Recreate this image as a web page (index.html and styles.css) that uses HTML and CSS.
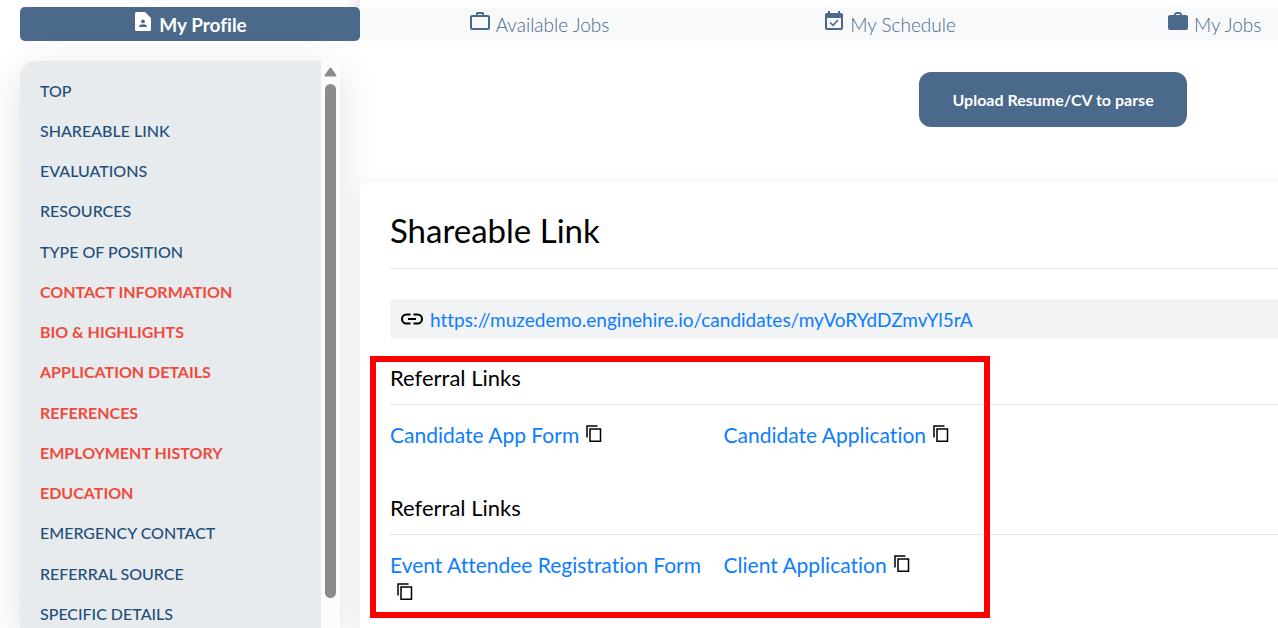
FILE: index.html
```html
<!DOCTYPE html>
<html lang="en">
<head>
<meta charset="utf-8">
<title>My Profile</title>
<link rel="stylesheet" href="styles.css">
</head>
<body>
<svg class="defs" aria-hidden="true">
  <symbol id="copy" viewBox="0 0 16 18"><path d="M1 12.500V1H11.500" /><path d="M4 4H14.500V16.250H4Z" /></symbol>
</svg>
<div class="page">
  <div class="top-edge"></div>
  <nav class="tabs">
    <a class="tab active" href="#profile">
      <svg class="tab-icon" viewBox="0 0 20 22"><path fill="currentColor" fill-rule="evenodd" d="M3.500 1H12L18 7V18.500Q18 20 16.500 20H3.500Q2 20 2 18.500V2.500Q2 1 3.500 1ZM10 8.500A1.900 1.900 0 1 0 10 12.300A1.900 1.900 0 1 0 10 8.500ZM6.200 16H13.800V15Q13.500 13.400 10 13.300Q6.500 13.400 6.200 15Z"/></svg>
      <span>My Profile</span>
    </a>
    <a class="tab" href="#available">
      <svg class="tab-icon" viewBox="0 0 20 22"><path fill="none" stroke="currentColor" stroke-width="2" d="M2 5H18Q19 5 19 6V17Q19 18 18 18H2Q1 18 1 17V6Q1 5 2 5ZM7 5V2.500Q7 2 7.500 2H12.500Q13 2 13 2.500V5"/></svg>
      <span>Available Jobs</span>
    </a>
    <a class="tab" href="#schedule">
      <svg class="tab-icon" viewBox="0 0 20 22"><path fill="currentColor" fill-rule="evenodd" d="M4 0H6V2H14V0H16V2H17Q19 2 19 4V17Q19 19 17 19H3Q1 19 1 17V4Q1 2 3 2H4ZM3 7V17H17V7Z"/><path fill="none" stroke="currentColor" stroke-width="1.600" d="M6 11.500L9 14.300L14 9"/></svg>
      <span>My Schedule</span>
    </a>
    <a class="tab last" href="#jobs">
      <svg class="tab-icon" viewBox="0 0 20 22"><path fill="currentColor" fill-rule="evenodd" d="M6 4V3L8 1H12L14 3V4H18Q20 4 20 6V17Q20 19 18 19H2Q0 19 0 17V6Q0 4 2 4ZM8 4H12V3H8Z"/></svg>
      <span>My Jobs</span>
    </a>
  </nav>
  <div class="columns">
    <aside class="sidebar">
      <ul class="menu">
        <li><a href="#top">TOP</a></li>
        <li><a href="#share">SHAREABLE LINK</a></li>
        <li><a href="#evaluations">EVALUATIONS</a></li>
        <li><a href="#resources">RESOURCES</a></li>
        <li><a href="#position">TYPE OF POSITION</a></li>
        <li><a class="missing" href="#contact">CONTACT INFORMATION</a></li>
        <li><a class="missing" href="#bio">BIO &amp; HIGHLIGHTS</a></li>
        <li><a class="missing" href="#application">APPLICATION DETAILS</a></li>
        <li><a class="missing" href="#references">REFERENCES</a></li>
        <li><a class="missing" href="#employment">EMPLOYMENT HISTORY</a></li>
        <li><a class="missing" href="#education">EDUCATION</a></li>
        <li><a href="#emergency">EMERGENCY CONTACT</a></li>
        <li><a href="#source">REFERRAL SOURCE</a></li>
        <li><a href="#specific">SPECIFIC DETAILS</a></li>
      </ul>
      <div class="scrollbar">
        <svg class="scroll-up" viewBox="0 0 13 10"><path d="M6.500 1.500L11.500 8.500H1.500Z"/></svg>
        <div class="thumb"></div>
      </div>
    </aside>
    <main class="content">
      <button class="upload" type="button">Upload Resume/CV to parse</button>
      <section class="panel" id="share">
        <h1>Shareable Link</h1>
        <div class="link-bar">
          <svg class="chain" viewBox="0 0 24 14"><path d="M10.500 2.500H6.500A4.500 4.500 0 0 0 6.500 11.500H10.500M13.500 2.500H17.500A4.500 4.500 0 0 1 17.500 11.500H13.500M8 7H16"/></svg>
          <a href="#candidate">https://muzedemo.enginehire.io/candidates/myVoRYdDZmvYl5rA</a>
        </div>
        <h2>Referral Links</h2>
        <div class="links">
          <div><a href="#app-form">Candidate App Form</a><button class="copy" type="button" aria-label="Copy"><svg><use href="#copy"/></svg></button></div>
          <div><a href="#application-form">Candidate Application</a><button class="copy" type="button" aria-label="Copy"><svg><use href="#copy"/></svg></button></div>
        </div>
        <h2>Referral Links</h2>
        <div class="links">
          <div><a href="#event">Event Attendee Registration Form</a><button class="copy" type="button" aria-label="Copy"><svg><use href="#copy"/></svg></button></div>
          <div><a href="#client">Client Application</a><button class="copy" type="button" aria-label="Copy"><svg><use href="#copy"/></svg></button></div>
        </div>
        <div class="highlight"></div>
      </section>
    </main>
  </div>
</div>
</body>
</html>
```
FILE: styles.css
```css
* { box-sizing: border-box; }
body {
  margin: 0;
  background: #fff;
  color: #000;
  font-family: Lato, "Open Sans", sans-serif;
  font-variant-ligatures: no-common-ligatures;
  overflow: hidden;
}
a { text-decoration: none; color: #0d7dff; }
.defs { display: none; }
.page { height: 100vh; display: flex; flex-direction: column; padding-left: 20px; overflow: hidden; }
.top-edge { height: 7px; flex: none; width: 340px; background: linear-gradient(to left, #ececec, #fff 16px); }

.tabs {
  flex: none;
  display: grid;
  grid-template-columns: 340px 359fr 342fr 217fr;
  background: #f8f9fb;
}
.tab {
  display: flex;
  align-items: center;
  justify-content: center;
  gap: 6px;
  height: 34px;
  color: #4b698b;
  font-size: 19px;
  font-weight: 300;
  white-space: nowrap;
}
.tab.active { background: #4b698b; color: #fff; font-weight: 700; border-radius: 5px; }
.tab.last { justify-content: flex-start; padding-left: 107px; }
.tab-icon { width: 20px; height: 22px; color: #4b698b; margin-bottom: 4px; }
.active .tab-icon { color: #fff; }

.columns {
  flex: 1;
  min-height: 0;
  display: grid;
  grid-template: minmax(0, 1fr) / 320px minmax(0, 1fr);
  gap: 20px;
  padding-top: 20px;
}
.sidebar {
  display: flex;
  border-radius: 16px 0 0 0;
  background: #fcfcfc;
  box-shadow: 0 10px 40px rgba(0, 0, 0, 0.12);
}
.menu { flex: 1; margin: 0; padding: 10px 20px; list-style: none; background: #e8ebee; border-radius: 16px 0 0 0; overflow: hidden; }
.menu li { height: 40px; line-height: 40px; font-size: 16px; white-space: nowrap; }
.menu li:nth-child(4n) { margin-bottom: 1px; }
.menu a { color: #1f4e79; font-weight: 500; }
.menu .missing { color: #ee4b3c; font-weight: 700; }
.scrollbar { width: 19px; display: flex; flex-direction: column; align-items: center; padding: 6px 0 30px; gap: 7px; }
.scroll-up { width: 13px; height: 10px; flex: none; fill: #8b8b8b; stroke: #8b8b8b; stroke-width: 2; stroke-linejoin: round; }
.thumb { width: 11px; flex: 1; border-radius: 6px; background: #8b8b8b; }

/* The content is wider than the viewport and runs off its right edge. */
.content { width: 151%; display: flex; flex-direction: column; align-items: center; padding-top: 11px; }
.upload {
  flex: none;
  height: 55px;
  padding: 0 33px;
  border: 0;
  border-radius: 12px;
  background: #4b698b;
  color: #fff;
  font: 700 16px Lato, "Open Sans", sans-serif;
}
.panel {
  position: relative;
  flex: 1 0 auto;
  width: 100%;
  margin-top: 55px;
  padding: 28px 30px;
  border-radius: 8px;
  background: #fff;
  box-shadow: 0 5px 20px rgba(0, 0, 0, 0.08);
}
h1 { margin: 0 0 30px; padding-bottom: 18px; border-bottom: 1px solid #e4e5e8; font-size: 33px; line-height: 40px; font-weight: 400; }
.link-bar { display: flex; align-items: center; gap: 6px; height: 40px; padding-left: 10px; margin-bottom: 25px; border-radius: 4px; background: #f2f3f5; font-size: 19px; }
.chain { width: 24px; height: 14px; fill: none; stroke: #000; stroke-width: 2; }
h2 { margin: 0 0 16px; padding-bottom: 12px; border-bottom: 1px solid #e4e5e8; font-size: 22px; line-height: 28px; font-weight: 400; }
.links { display: grid; grid-template-columns: repeat(4, 1fr); gap: 8px; min-height: 73px; font-size: 21px; line-height: 28px; font-weight: 400; }
.copy { margin: 0 0 0 7px; padding: 0; border: 0; background: none; line-height: 0; }
.copy svg { width: 16px; height: 18px; fill: none; stroke: #000; stroke-width: 1.500; }
.highlight { position: absolute; left: 10px; top: 174px; width: 620px; height: 262px; border: 6px solid #f00; pointer-events: none; }
```
